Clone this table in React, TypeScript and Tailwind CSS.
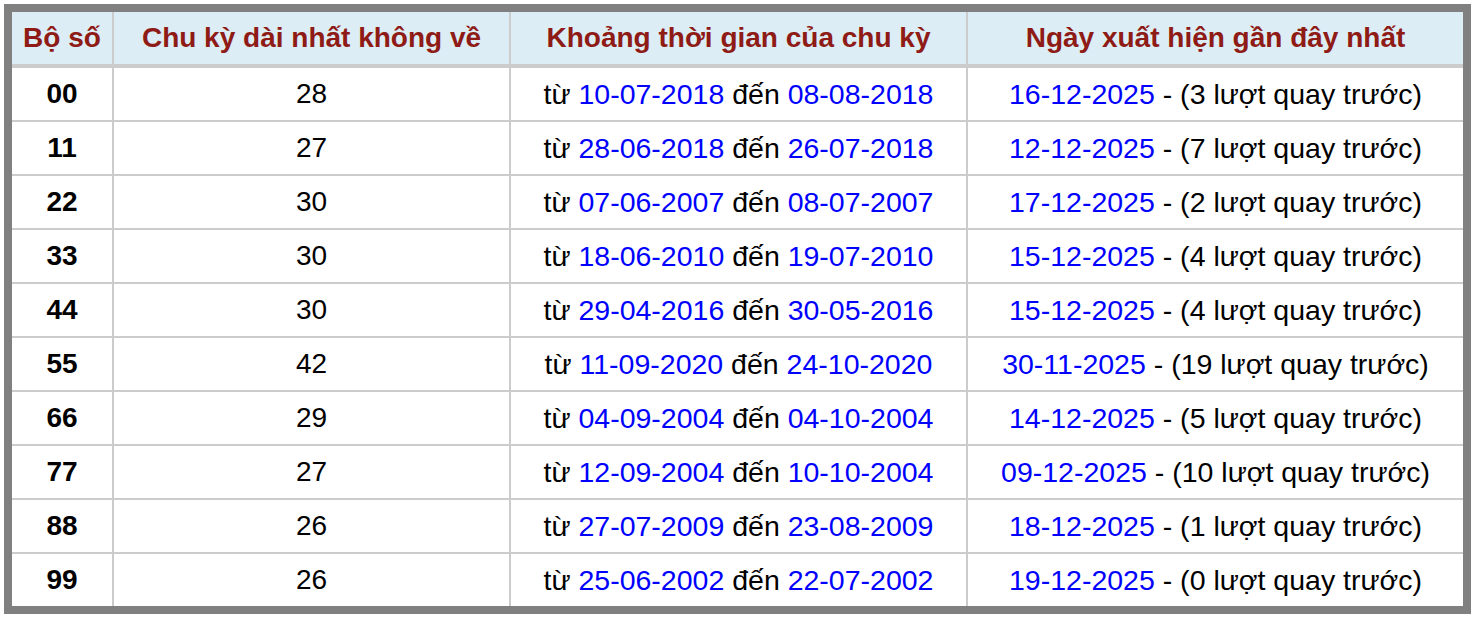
const rows = [
  { num: "00", cycle: 28, from: "10-07-2018", to: "08-08-2018", last: "16-12-2025", ago: 3 },
  { num: "11", cycle: 27, from: "28-06-2018", to: "26-07-2018", last: "12-12-2025", ago: 7 },
  { num: "22", cycle: 30, from: "07-06-2007", to: "08-07-2007", last: "17-12-2025", ago: 2 },
  { num: "33", cycle: 30, from: "18-06-2010", to: "19-07-2010", last: "15-12-2025", ago: 4 },
  { num: "44", cycle: 30, from: "29-04-2016", to: "30-05-2016", last: "15-12-2025", ago: 4 },
  { num: "55", cycle: 42, from: "11-09-2020", to: "24-10-2020", last: "30-11-2025", ago: 19 },
  { num: "66", cycle: 29, from: "04-09-2004", to: "04-10-2004", last: "14-12-2025", ago: 5 },
  { num: "77", cycle: 27, from: "12-09-2004", to: "10-10-2004", last: "09-12-2025", ago: 10 },
  { num: "88", cycle: 26, from: "27-07-2009", to: "23-08-2009", last: "18-12-2025", ago: 1 },
  { num: "99", cycle: 26, from: "25-06-2002", to: "22-07-2002", last: "19-12-2025", ago: 0 },
];

const headers = ["Bộ số", "Chu kỳ dài nhất không về", "Khoảng thời gian của chu kỳ", "Ngày xuất hiện gần đây nhất"];

const cols = "grid grid-cols-[100px_395px_455px_495px] gap-x-[2px]";

export default function App() {
  return (
    <div className="bg-white p-1 font-['Liberation_Sans',Arial,sans-serif]">
      <div className="flex w-[1467px] flex-col gap-[4px] border-8 border-[#808080] bg-[#cccccc]">
        <div className={`${cols} h-[52px]`}>
          {headers.map((h) => (
            <div
              key={h}
              className="flex items-center justify-center bg-[#ddedf6] text-[28px] font-bold text-[#8e1b15]"
            >
              {h}
            </div>
          ))}
        </div>

        <div className={`${cols} gap-y-[2px]`}>
          {rows.map((row) => (
            <div key={row.num} className="contents">
              <div className="flex h-[52px] items-center justify-center bg-white text-[28px] font-bold text-black">
                {row.num}
              </div>
              <div className="flex items-center justify-center bg-white text-[28px] text-black">{row.cycle}</div>
              <div className="flex items-center justify-center bg-white text-[28.5px] text-black">
                từ&nbsp;<span className="text-[#0000ff]">{row.from}</span>&nbsp;đến&nbsp;
                <span className="text-[#0000ff]">{row.to}</span>
              </div>
              <div className="flex items-center justify-center bg-white text-[28.5px] text-black">
                <span className="text-[#0000ff]">{row.last}</span>&nbsp;- ({row.ago} lượt quay trước)
              </div>
            </div>
          ))}
        </div>
      </div>
    </div>
  );
}
